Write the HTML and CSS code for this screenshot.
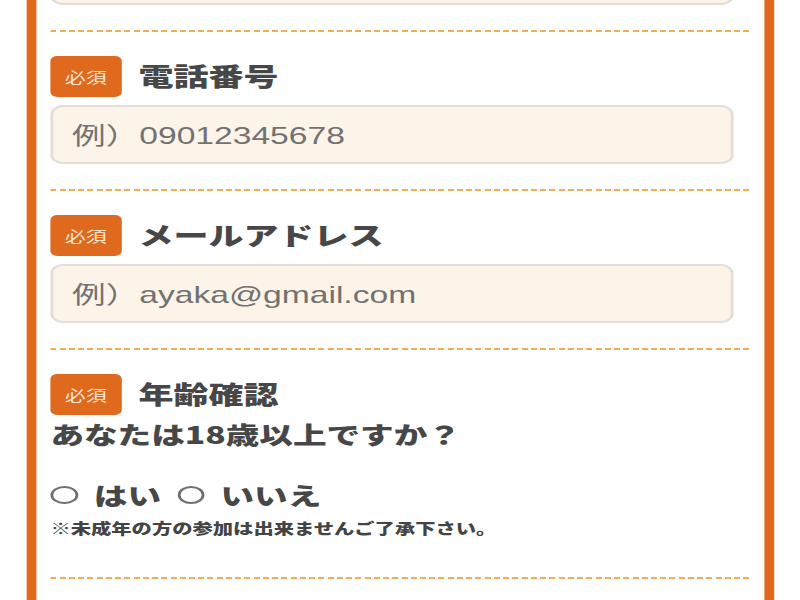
FILE: index.html
```html
<!DOCTYPE html>
<html lang="ja">
<head>
<meta charset="utf-8">
<title>フォーム</title>
<link rel="stylesheet" href="styles.css">
</head>
<body>
<div class="page">
  <div class="form">
    <div class="field field-top">
      <div class="input"></div>
    </div>
    <div class="divider"></div>

    <div class="field">
      <div class="label-row">
        <span class="badge">必須</span>
        <span class="label">電話番号</span>
      </div>
      <div class="input">例）09012345678</div>
    </div>
    <div class="divider"></div>

    <div class="field">
      <div class="label-row">
        <span class="badge">必須</span>
        <span class="label">メールアドレス</span>
      </div>
      <div class="input">例）ayaka@gmail.com</div>
    </div>
    <div class="divider"></div>

    <div class="field field-age">
      <div class="label-row">
        <span class="badge">必須</span>
        <span class="label">年齢確認</span>
      </div>
      <p class="question">あなたは18歳以上ですか？</p>
      <div class="radio-row">
        <span class="radio"></span>
        <span class="choice">はい</span>
        <span class="radio"></span>
        <span class="choice">いいえ</span>
      </div>
      <p class="note">※未成年の方の参加は出来ませんご了承下さい。</p>
    </div>
    <div class="divider"></div>

    <div class="field field-bottom"></div>
  </div>
</div>
</body>
</html>
```

FILE: styles.css
```css
html, body {
  margin: 0;
  padding: 0;
  background: #ffffff;
  overflow: hidden;
}

body {
  font-family: "Noto Sans CJK JP", "Noto Sans", sans-serif;
  color: #474747;
}

.page {
  width: 571.43px;
  transform: scaleX(1.4);
  transform-origin: 0 0;
}

.form {
  margin: -54px 18.5px 0;
  padding: 0 10.5px;
  border-left: 7.5px solid #df6a1d;
  border-right: 7.5px solid #df6a1d;
  background: #ffffff;
  min-height: 720px;
}

.field {
  padding: 24px 0 25px;
}

.field-top {
  padding-top: 0;
}

.field-age {
  padding-bottom: 39px;
}

.divider {
  height: 2px;
  background: repeating-linear-gradient(90deg, #f0ae5c 0 4.3px, transparent 4.3px 6.6px);
}

.label-row {
  display: flex;
  align-items: center;
  gap: 12.5px;
  height: 41px;
}

.badge {
  display: flex;
  align-items: center;
  justify-content: center;
  width: 50.5px;
  height: 41px;
  border-radius: 5px;
  background: #df6a1d;
  color: #fce6d4;
  font-size: 15px;
  line-height: 1;
}

.label {
  font-size: 25px;
  font-weight: 900;
  color: #474747;
  line-height: 1;
  padding-bottom: 3px;
}

.input {
  box-sizing: border-box;
  height: 59px;
  margin: 8px 11.5px 0 0;
  padding: 0 0 3px 13.5px;
  display: flex;
  align-items: center;
  background: #fdf4e9;
  border: 2px solid #e2ddd6;
  border-radius: 9px;
  font-family: "Liberation Sans", "Noto Sans CJK JP", sans-serif;
  font-size: 24px;
  color: #727272;
}

.field-top .input {
  margin-top: 0;
}

.question {
  margin: 1px 0 0;
  font-size: 24px;
  line-height: 36px;
  font-weight: 900;
  color: #474747;
}

.radio-row {
  display: flex;
  align-items: center;
  gap: 11.5px;
  margin-top: 25px;
  height: 36px;
}

.radio {
  box-sizing: border-box;
  width: 19.5px;
  height: 18px;
  border: 2px solid #707070;
  border-radius: 50%;
}

.choice {
  font-size: 24px;
  font-weight: 900;
  line-height: 36px;
  color: #474747;
}

.note {
  margin: 4px 0 0;
  font-size: 14.5px;
  line-height: 21px;
  font-weight: 900;
  color: #444444;
}

.field-bottom {
  height: 40px;
}
```
